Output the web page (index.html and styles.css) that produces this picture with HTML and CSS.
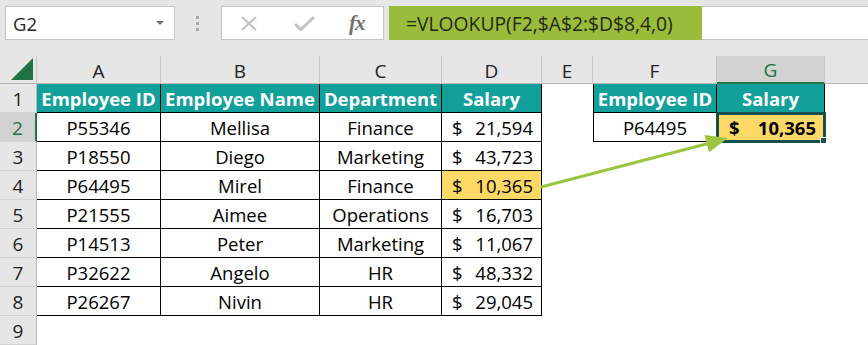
FILE: index.html
```html
<!DOCTYPE html>
<html lang="en">

<head>
    <meta charset="UTF-8">
    <title>VLOOKUP example</title>
    <link rel="stylesheet" href="styles.css">
</head>

<body>

<!-- name box + formula bar -->
<div class="topbar">
    <div class="namebox">
        <span>G2</span>
        <span class="caret"></span>
    </div>
    <div class="grip"><i></i><i></i><i></i></div>
    <div class="fxbox">
        <svg class="ico" width="18" height="15" viewBox="0 0 18 15">
            <path d="M2 1 L16 14 M16 1 L2 14" stroke="#c3c3c3" stroke-width="2.2" fill="none"/>
        </svg>
        <svg class="ico" width="21" height="15" viewBox="0 0 21 15">
            <path d="M1 8 L7 13.5 L20 1" stroke="#c3c3c3" stroke-width="3" fill="none"/>
        </svg>
        <span class="fx">fx</span>
    </div>
    <div class="formula">
        <div class="hl">=VLOOKUP(F2,$A$2:$D$8,4,0)</div>
    </div>
</div>

<!-- worksheet -->
<div class="sheet">
    <div class="ch corner">
        <svg width="22" height="22" viewBox="0 0 22 22"><polygon points="22,0 22,22 0,22" fill="#217346"/></svg>
    </div>
    <div class="ch">A</div>
    <div class="ch">B</div>
    <div class="ch">C</div>
    <div class="ch">D</div>
    <div class="ch">E</div>
    <div class="ch">F</div>
    <div class="ch sel">G</div>
    <div class="ch last"></div>

    <div class="rh">1</div>
    <div class="c b th">Employee ID</div>
    <div class="c b th">Employee Name</div>
    <div class="c b th">Department</div>
    <div class="c b th">Salary</div>
    <div class="c"></div>
    <div class="c b bl th">Employee ID</div>
    <div class="c b th">Salary</div>
    <div class="c"></div>

    <div class="rh sel">2</div>
    <div class="c b">P55346</div>
    <div class="c b">Mellisa</div>
    <div class="c b">Finance</div>
    <div class="c b money"><span>$</span><span>21,594</span></div>
    <div class="c"></div>
    <div class="c b bl">P64495</div>
    <div class="c b money result"><span>$</span><span>10,365</span><i class="handle"></i></div>
    <div class="c"></div>

    <div class="rh">3</div>
    <div class="c b">P18550</div>
    <div class="c b">Diego</div>
    <div class="c b">Marketing</div>
    <div class="c b money"><span>$</span><span>43,723</span></div>
    <div class="c"></div><div class="c"></div><div class="c"></div><div class="c"></div>

    <div class="rh">4</div>
    <div class="c b">P64495</div>
    <div class="c b">Mirel</div>
    <div class="c b">Finance</div>
    <div class="c b money found"><span>$</span><span>10,365</span></div>
    <div class="c"></div><div class="c"></div><div class="c"></div><div class="c"></div>

    <div class="rh">5</div>
    <div class="c b">P21555</div>
    <div class="c b">Aimee</div>
    <div class="c b">Operations</div>
    <div class="c b money"><span>$</span><span>16,703</span></div>
    <div class="c"></div><div class="c"></div><div class="c"></div><div class="c"></div>

    <div class="rh">6</div>
    <div class="c b">P14513</div>
    <div class="c b">Peter</div>
    <div class="c b">Marketing</div>
    <div class="c b money"><span>$</span><span>11,067</span></div>
    <div class="c"></div><div class="c"></div><div class="c"></div><div class="c"></div>

    <div class="rh">7</div>
    <div class="c b">P32622</div>
    <div class="c b">Angelo</div>
    <div class="c b">HR</div>
    <div class="c b money"><span>$</span><span>48,332</span></div>
    <div class="c"></div><div class="c"></div><div class="c"></div><div class="c"></div>

    <div class="rh">8</div>
    <div class="c b">P26267</div>
    <div class="c b">Nivin</div>
    <div class="c b">HR</div>
    <div class="c b money"><span>$</span><span>29,045</span></div>
    <div class="c"></div><div class="c"></div><div class="c"></div><div class="c"></div>

    <div class="rh">9</div>
    <div class="c"></div><div class="c"></div><div class="c"></div><div class="c"></div>
    <div class="c"></div><div class="c"></div><div class="c"></div><div class="c"></div>
</div>

<!-- arrow from D4 to G2 -->
<svg class="arrow" width="868" height="345" viewBox="0 0 868 345">
    <line x1="541" y1="187" x2="712" y2="142.5" stroke="#9bc43f" stroke-width="3"/>
    <polygon points="728,138 704.4,134.9 709,152.3" fill="#9bc43f"/>
</svg>

</body>

</html>
```

FILE: styles.css
```css
body {
    margin: 0;
    background: #fff;
    font-family: "Open Sans", sans-serif;
    overflow: hidden;
    position: relative;
}

/* top bar */
.topbar {
    height: 56px;
    background: #e6e6e6;
    display: flex;
    align-items: flex-start;
    padding-top: 6px;
    box-sizing: border-box;
}

.namebox {
    margin-left: 5px;
    width: 170px;
    height: 34px;
    background: #fff;
    border: 1px solid #c6c6c6;
    box-sizing: border-box;
    display: flex;
    align-items: center;
    justify-content: space-between;
    padding: 0 10px 0 7px;
    font-size: 18.5px;
    color: #262626;
}

.caret {
    width: 0;
    height: 0;
    border-left: 4px solid transparent;
    border-right: 4px solid transparent;
    border-top: 4px solid #6d6d6d;
}

.grip {
    margin: 10px 22px 0 21px;
    display: flex;
    flex-direction: column;
    gap: 3px;
}

.grip i {
    width: 3px;
    height: 3px;
    background: #a8a8a8;
}

.fxbox {
    width: 163px;
    height: 34px;
    background: #fff;
    border: 1px solid #c6c6c6;
    box-sizing: border-box;
    display: flex;
    align-items: center;
    padding-left: 18px;
}

.fxbox .ico + .ico {
    margin-left: 36px;
}

.fx {
    margin-left: 34px;
    font-family: "Liberation Serif", serif;
    font-style: italic;
    font-weight: bold;
    font-size: 21px;
    color: #707070;
    letter-spacing: -1px;
}

.formula {
    margin-left: 5px;
    flex: 1;
    height: 34px;
    background: #fff;
    border-top: 1px solid #c6c6c6;
    border-bottom: 1px solid #c6c6c6;
    box-sizing: border-box;
    display: flex;
}

.hl {
    width: 313px;
    margin: -1px 0;
    background: #9bbb3b;
    box-sizing: border-box;
    padding-left: 17px;
    display: flex;
    align-items: center;
    font-size: 19.3px;
    color: #1f2a16;
}

/* sheet grid */
.sheet {
    display: grid;
    grid-template-columns: 37px 124px 159px 122px 100px 51px 124px 108px 1fr;
    grid-template-rows: 28px repeat(9, 29px);
    font-size: 18.5px;
}

.sheet > div {
    box-sizing: border-box;
}

.ch {
    background: #e6e6e6;
    border-right: 1px solid #c8c8c8;
    border-bottom: 1px solid #b8b8b8;
    display: flex;
    align-items: center;
    justify-content: center;
    padding-top: 2px;
    color: #222;
    font-size: 19px;
}

.ch.last {
    border-right: none;
}

.ch.sel {
    background: #d2d2d2;
    border-bottom: 2px solid #217346;
    color: #217346;
}

.corner {
    justify-content: flex-end;
    align-items: flex-end;
    padding: 0 3px 3px 0;
}

.rh {
    background: #e6e6e6;
    border-right: 1px solid #b8b8b8;
    border-bottom: 1px solid #d4d4d4;
    display: flex;
    align-items: center;
    justify-content: center;
    line-height: 28px;
    padding-top: 1px;
    color: #222;
    font-size: 19px;
}

.rh.sel {
    background: #d2d2d2;
    border-right: 2px solid #217346;
    color: #217346;
}

.c {
    display: flex;
    align-items: center;
    justify-content: center;
    line-height: 28px;
    padding-top: 1px;
    color: #000;
}

.b {
    border-right: 1px solid #000;
    border-bottom: 1px solid #000;
}

.bl {
    border-left: 1px solid #000;
}

.th {
    background: #12a09a;
    color: #fff;
    font-weight: bold;
}

.money {
    justify-content: space-between;
    padding-left: 10px;
    padding-right: 8px;
}

.found {
    background: #ffd966;
}

.result {
    background: #ffd966;
    font-weight: bold;
    position: relative;
    outline: 3px solid #174f4f;
    outline-offset: -2px;
    padding-left: 12px;
    padding-right: 8px;
}

.handle {
    position: absolute;
    right: -3px;
    bottom: -3px;
    width: 5px;
    height: 5px;
    background: #174f4f;
    border: 1px solid #fff;
}

.arrow {
    position: absolute;
    left: 0;
    top: 0;
    pointer-events: none;
}
```
